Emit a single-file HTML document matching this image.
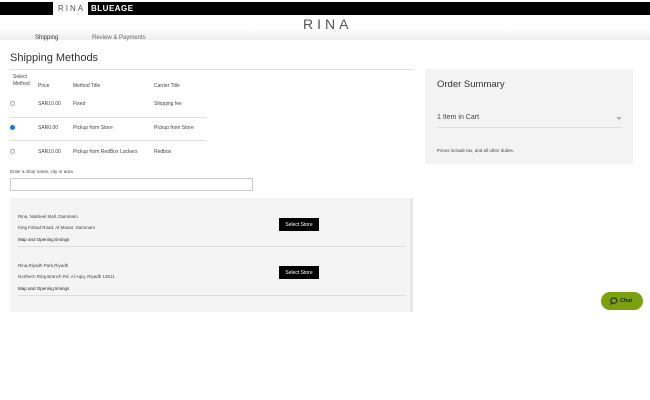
<!DOCTYPE html>
<html><head><meta charset="utf-8"><style>
*{margin:0;padding:0;box-sizing:border-box}
body{width:650px;height:400px;overflow:hidden;background:#fff;font-family:"Liberation Sans",sans-serif;color:#333;position:relative}
.a{position:absolute;white-space:nowrap}
.s{font-size:5px;color:#444}
</style></head><body>
<div class="a" style="left:0;top:2px;width:650px;height:13px;background:#000"></div>
<div class="a" style="left:53px;top:2px;width:35px;height:13px;background:#fff;font-size:8px;letter-spacing:2px;color:#555;line-height:13px;padding-left:5px">RINA</div>
<div class="a" style="left:91px;top:2px;font-size:8px;font-weight:bold;color:#fff;line-height:13px;letter-spacing:.5px">BLUEAGE</div>
<div class="a" style="left:0;top:28px;width:650px;height:12px;background:linear-gradient(#fff,#eee)"></div>
<div class="a" style="left:303px;top:16px;font-size:14px;letter-spacing:4px;color:#555">RINA</div>
<div class="a" style="left:35px;top:35px;font-size:6px;color:#333">Shipping</div>
<div class="a" style="left:92px;top:35px;font-size:6px;color:#666">Review &amp; Payments</div>
<div class="a" style="left:10px;top:52px;font-size:11px;color:#333">Shipping Methods</div>
<div class="a" style="left:10px;top:69px;width:403px;height:1px;background:#ddd"></div>
<div class="a s" style="left:13px;top:74px;line-height:7px">Select<br>Method</div>
<div class="a s" style="left:38px;top:83px">Price</div>
<div class="a s" style="left:73px;top:83px">Method Title</div>
<div class="a s" style="left:154px;top:83px">Carrier Title</div>
<div class="a" style="left:10px;top:101px;width:5px;height:5px;border:1px solid #aaa;border-radius:50%"></div>
<div class="a s" style="left:38px;top:101px">SAR10.00</div><div class="a s" style="left:73px;top:101px">Fixed</div><div class="a s" style="left:154px;top:101px">Shipping fee</div>
<div class="a" style="left:10px;top:117px;width:196px;height:1px;background:#ddd"></div>
<div class="a" style="left:10px;top:125px;width:5px;height:5px;border-radius:50%;background:#1a73e8"></div>
<div class="a s" style="left:38px;top:125px">SAR0.00</div><div class="a s" style="left:73px;top:125px">Pickup from Store</div><div class="a s" style="left:154px;top:125px">Pickup from Store</div>
<div class="a" style="left:10px;top:140px;width:196px;height:1px;background:#ddd"></div>
<div class="a" style="left:10px;top:149px;width:5px;height:5px;border:1px solid #aaa;border-radius:50%"></div>
<div class="a s" style="left:38px;top:149px">SAR10.00</div><div class="a s" style="left:73px;top:149px">Pickup from RedBox Lockers</div><div class="a s" style="left:154px;top:149px">Redbox</div>
<div class="a" style="left:10px;top:169px;font-size:4.5px;color:#444">Enter a shop name, city or area</div>
<div class="a" style="left:10px;top:178px;width:243px;height:13px;border:1px solid #ccc"></div>
<div class="a" style="left:10px;top:198px;width:400px;height:114px;background:#f4f4f4"></div>
<div class="a" style="left:410px;top:198px;width:3px;height:114px;background:#e8e8e8"></div>
<div class="a s" style="left:18px;top:214px;font-size:4.5px">Rina, Nakheel Mall, Dammam</div>
<div class="a s" style="left:18px;top:225px;font-size:4.5px">King Fahad Road, Al Manar, Dammam</div>
<div class="a s" style="left:18px;top:237px;font-size:4.5px;color:#222">Map and Opening timings</div>
<div class="a" style="left:18px;top:246px;width:387px;height:1px;background:#ddd"></div>
<div class="a" style="left:279px;top:218px;width:40px;height:13px;background:#000;color:#fff;font-size:5px;text-align:center;line-height:14px">Select Store</div>
<div class="a s" style="left:18px;top:263px;font-size:4.5px">Rina,Riyadh Park,Riyadh</div>
<div class="a s" style="left:18px;top:274px;font-size:4.5px">Northern Ring Branch Rd, Al Aqiq, Riyadh 13511</div>
<div class="a s" style="left:18px;top:286px;font-size:4.5px;color:#222">Map and Opening timings</div>
<div class="a" style="left:18px;top:295px;width:387px;height:1px;background:#ddd"></div>
<div class="a" style="left:279px;top:266px;width:40px;height:13px;background:#000;color:#fff;font-size:5px;text-align:center;line-height:14px">Select Store</div>
<div class="a" style="left:425px;top:69px;width:208px;height:95px;background:#f3f3f3"></div>
<div class="a" style="left:437px;top:79px;font-size:9.5px;color:#333">Order Summary</div>
<div class="a" style="left:437px;top:114px;font-size:7px;color:#444">1 Item in Cart</div>
<svg class="a" style="left:616px;top:116px" width="6" height="4" viewBox="0 0 6 4"><path d="M1 1l2 2 2-2" fill="none" stroke="#777" stroke-width=".8"/></svg>
<div class="a" style="left:437px;top:127px;width:184px;height:1px;background:#ddd"></div>
<div class="a" style="left:437px;top:148px;font-size:4.5px;color:#444">Prices include tax, and all other duties.</div>
<div class="a" style="left:601px;top:292px;width:42px;height:18px;background:#7aa20f;border-radius:9px"></div>
<svg class="a" style="left:610px;top:297px" width="8" height="8" viewBox="0 0 8 8"><path d="M4 1a3 2.6 0 1 1-1.6 4.8L1 7l.5-1.7A3 2.6 0 0 1 4 1z" fill="none" stroke="#222" stroke-width="1"/></svg>
<div class="a" style="left:620px;top:298px;font-size:5.5px;font-weight:bold;color:#222">Chat</div>
</body></html>
